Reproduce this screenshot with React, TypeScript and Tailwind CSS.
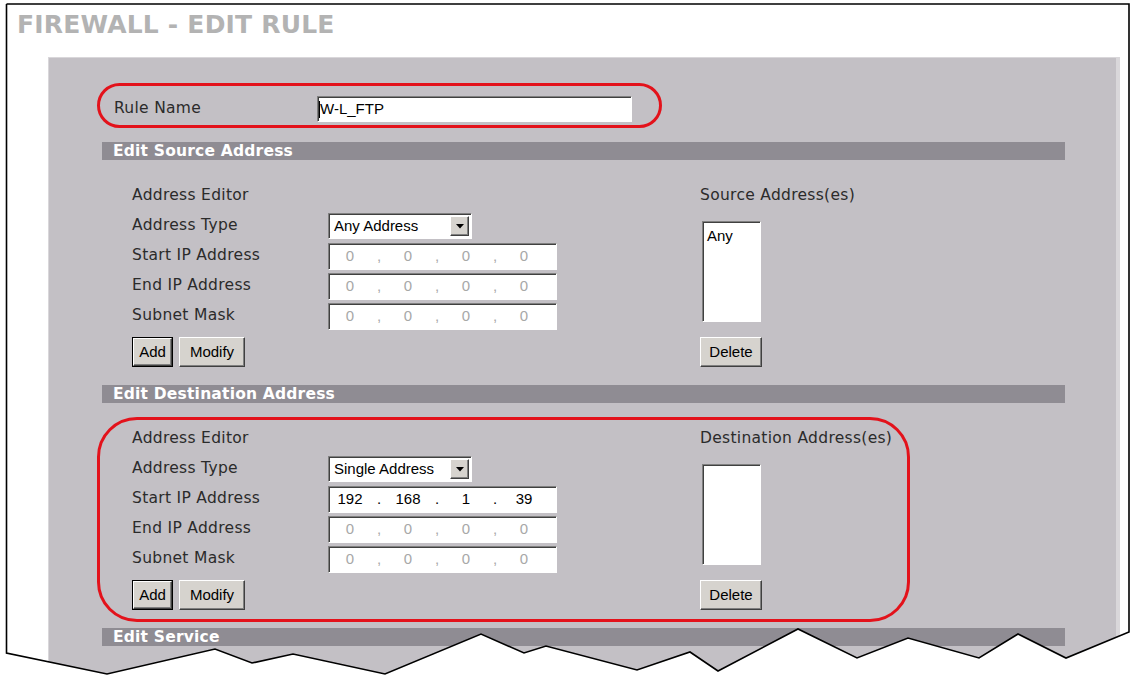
import { Fragment } from "react";

const label =
  "font-['DejaVu_Sans',Verdana,sans-serif] text-[15.5px] tracking-[0.3px] text-[#2b2b2b] whitespace-nowrap";
const ctl = "font-['Liberation_Sans',Arial,sans-serif] text-[15px]";
const inset =
  "border border-t-[#808080] border-l-[#808080] border-b-white border-r-white shadow-[inset_1px_1px_0_#404040] bg-white";
const raised =
  "border border-t-white border-l-white border-b-[#404040] border-r-[#404040] shadow-[inset_-1px_-1px_0_#808080] bg-[#d6d3ce]";

function Button({ text, width, isDefault }: { text: string; width: string; isDefault?: boolean }) {
  if (isDefault) {
    return (
      <div className={`${width} h-[30px] border border-black bg-[#d6d3ce]`}>
        <div className={`flex h-full w-full items-center justify-center ${raised} ${ctl} text-[14.5px] text-black`}>
          {text}
        </div>
      </div>
    );
  }
  return (
    <div className={`${width} flex h-[30px] items-center justify-center ${raised} ${ctl} text-[14.5px] text-black`}>
      {text}
    </div>
  );
}

function Select({ value }: { value: string }) {
  return (
    <div className={`flex h-[26px] w-[144px] items-center justify-between ${inset} ${ctl} text-black`}>
      <span className="pl-[5px]">{value}</span>
      <div className={`mr-[2px] flex h-[20px] w-[19px] items-center justify-center ${raised}`}>
        <svg width="8" height="5" viewBox="0 0 8 5">
          <polygon points="0,0 8,0 4,4.5" fill="#000" />
        </svg>
      </div>
    </div>
  );
}

function IpBox({ octets, disabled }: { octets: string[]; disabled?: boolean }) {
  const color = disabled ? "text-[#a8a8a8]" : "text-black";
  return (
    <div className={`flex h-[27px] w-[229px] items-center pl-[1px] ${inset} ${ctl} ${color}`}>
      {octets.map((o, i) => (
        <Fragment key={i}>
          {i > 0 && <span className="w-[18px] text-center">{disabled ? "," : "."}</span>}
          <span className="w-[40px] text-center">{o}</span>
        </Fragment>
      ))}
    </div>
  );
}

function Bar({ title }: { title: string }) {
  return (
    <div className="h-[18px] bg-[#8f8c93] pl-[11px] font-['DejaVu_Sans',Verdana,sans-serif] text-[15.5px] font-bold leading-[18px] tracking-[0.2px] text-white">
      {title}
    </div>
  );
}

type SectionProps = {
  title: string;
  rightLabel: string;
  type: string;
  start: string[];
  startDisabled: boolean;
  items: string[];
  circled?: boolean;
};

function Section({ title, rightLabel, type, start, startDisabled, items, circled }: SectionProps) {
  const zero = ["0", "0", "0", "0"];
  return (
    <div>
      <Bar title={title} />
      <div className="relative flex pt-[21px] pb-[18px]">
        <div className="w-[598px] pl-[30px]">
          <div className="flex h-[30px] items-center">
            <span className={label}>Address Editor</span>
          </div>
          <div className="flex h-[30px] items-center">
            <span className={`${label} w-[196px]`}>Address Type</span>
            <Select value={type} />
          </div>
          <div className="flex h-[30px] items-center">
            <span className={`${label} w-[196px]`}>Start IP Address</span>
            <IpBox octets={start} disabled={startDisabled} />
          </div>
          <div className="flex h-[30px] items-center">
            <span className={`${label} w-[196px]`}>End IP Address</span>
            <IpBox octets={zero} disabled />
          </div>
          <div className="flex h-[30px] items-center">
            <span className={`${label} w-[196px]`}>Subnet Mask</span>
            <IpBox octets={zero} disabled />
          </div>
          <div className="mt-[6px] flex gap-[6px]">
            <Button text="Add" width="w-[41px]" isDefault />
            <Button text="Modify" width="w-[66px]" />
          </div>
        </div>
        <div className="flex flex-col">
          <div className="flex h-[30px] items-center">
            <span className={label}>{rightLabel}</span>
          </div>
          <div className={`mt-[10px] ml-[2px] h-[101px] w-[59px] ${inset} ${ctl} pl-[4px] pt-[3px] text-black`}>
            {items.map((it) => (
              <div key={it}>{it}</div>
            ))}
          </div>
          <div className="mt-[15px]">
            <Button text="Delete" width="w-[62px]" />
          </div>
        </div>
        {circled && (
          <div className="pointer-events-none absolute top-[14px] left-[-5px] h-[205px] w-[813px] rounded-[40px] border-[3px] border-[#e3121b]" />
        )}
      </div>
    </div>
  );
}

export default function App() {
  return (
    <div className="relative h-[679px] w-[1131px] overflow-hidden bg-white">
      <div className="pl-[17px] pt-[12px] font-['DejaVu_Sans',Verdana,sans-serif] text-[25px] font-bold leading-[25px] tracking-[0.2px] text-[#b3b3b3]">
        FIREWALL - EDIT RULE
      </div>

      <div className="mt-[20px] ml-[48px] h-[700px] w-[1072px] border border-r-[4px] border-[#d9d7da] bg-[#c3c0c5] pt-[38px]">
        <div className="relative flex h-[26px] items-center">
          <span className={`${label} ml-[65px] w-[203px]`}>Rule Name</span>
          <div className={`flex h-[26px] w-[315px] items-center ${inset} ${ctl} text-black`}>
            <span className="ml-[1px] h-[17px] w-px bg-black" />
            <span>W-L_FTP</span>
          </div>
          <div className="pointer-events-none absolute top-[-13px] left-[48px] h-[45px] w-[565px] rounded-full border-[3px] border-[#e3121b]" />
        </div>

        <div className="mt-[20px] ml-[53px] w-[963px]">
          <Section
            title="Edit Source Address"
            rightLabel="Source Address(es)"
            type="Any Address"
            start={["0", "0", "0", "0"]}
            startDisabled
            items={["Any"]}
          />
          <Section
            title="Edit Destination Address"
            rightLabel="Destination Address(es)"
            type="Single Address"
            start={["192", "168", "1", "39"]}
            startDisabled={false}
            items={[]}
            circled
          />
          <Bar title="Edit Service" />
        </div>
      </div>

      <svg className="pointer-events-none absolute inset-0" width="1131" height="679" viewBox="0 0 1131 679">
        <polygon
          points="0,653 6.5,653 107,674 215,649 252,663 293,654 385,674 481,634 524,653 546,646 637,670 690,652 718,671 798,629 857,658 908,638 979,658 1018,634 1066,658 1129,632 1131,632 1131,679 0,679"
          fill="#fff"
        />
        <polyline
          points="6.5,4 6.5,653 107,674 215,649 252,663 293,654 385,674 481,634 524,653 546,646 637,670 690,652 718,671 798,629 857,658 908,638 979,658 1018,634 1066,658 1129,632 1129,4 6.5,4"
          fill="none"
          stroke="#000"
          strokeWidth="1.6"
        />
      </svg>
    </div>
  );
}
